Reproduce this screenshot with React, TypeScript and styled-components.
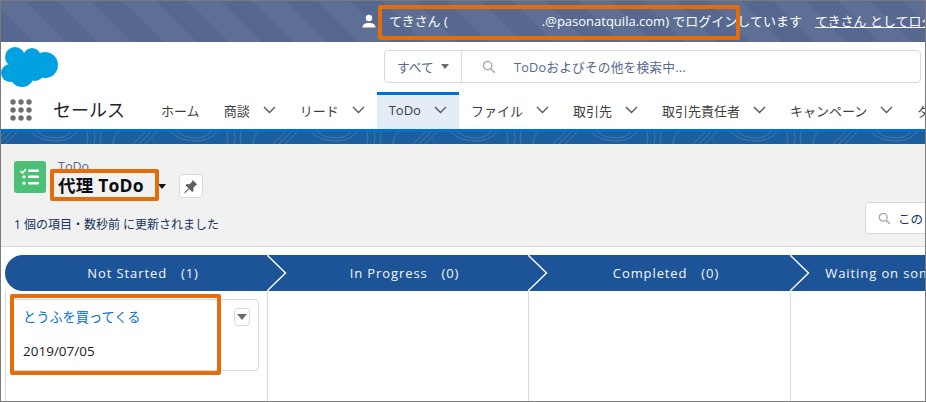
import styled, { createGlobalStyle } from 'styled-components';

const GlobalStyle = createGlobalStyle`
  html, body {
    margin: 0;
    padding: 0;
    background: #fff;
  }
  * {
    box-sizing: border-box;
  }
`

const Page = styled.div`
  position: relative;
  width: 926px;
  height: 402px;
  overflow: hidden;
  border: 1px solid #7a7a7a;
  font-family: "Open Sans", "Noto Sans CJK JP", sans-serif;
  color: #16325c;
  background: #fff;
`

const Banner = styled.div`
  height: 41px;
  padding: 0 0 2px 361px;
  display: flex;
  align-items: center;
  white-space: nowrap;
  color: #fff;
  font-size: 13px;
  background: repeating-linear-gradient(45deg, #56688f 0 23px, #5d6f94 23px 46px);
`

const UserIcon = styled.svg`
  width: 14px;
  height: 14px;
  margin-right: 13px;
  flex: none;
`

const Redacted = styled.span`
  display: inline-block;
  width: 94px;
`

const BannerLink = styled.span`
  margin-left: 13px;
  text-decoration: underline;
`

const SearchRow = styled.div`
  height: 50px;
  padding: 8px 4px 0 0;
  display: flex;
  justify-content: space-between;
  align-items: flex-start;
`

const Logo = styled.svg`
  width: 58px;
  height: 41px;
  margin-top: -3px;
  flex: none;
`

const SearchBox = styled.div`
  width: 537px;
  height: 33px;
  display: flex;
  background: #fff;
  border: 1px solid #d9d9d9;
  border-radius: 4px;
  font-size: 12.7px;
  color: #54698d;
`

const Scope = styled.div`
  width: 77px;
  display: flex;
  align-items: center;
  gap: 7px;
  padding-left: 12px;
  border-right: 1px solid #d9d9d9;
`

const Caret = styled.span<{ $color?: string; $w?: number }>`
  display: inline-block;
  width: 0;
  height: 0;
  border-left: ${p => p.$w ?? 4}px solid transparent;
  border-right: ${p => p.$w ?? 4}px solid transparent;
  border-top: ${p => (p.$w ?? 4) + 1}px solid ${p => p.$color ?? '#6b6b6b'};
`

const TitleCaret = styled(Caret)`
  margin-top: 2px;
`

const SearchHint = styled.div`
  display: flex;
  align-items: center;
  gap: 18px;
  padding-left: 20px;
  letter-spacing: 0.2px;
`

const Nav = styled.nav`
  height: 37px;
  padding-left: 9px;
  display: flex;
  align-items: stretch;
  white-space: nowrap;
`

const AppGrid = styled.svg`
  width: 22px;
  height: 22px;
  margin-top: 7px;
  flex: none;
`

const AppName = styled.div`
  width: 117px;
  padding: 3px 0 0 21px;
  font-size: 18px;
  line-height: 31px;
  color: #222;
  flex: none;
`

const Tab = styled.div<{ $active?: boolean }>`
  display: flex;
  align-items: center;
  gap: 13px;
  height: 37px;
  padding: 0 12px 4px;
  font-size: 13px;
  color: #3e3e3c;
  flex: none;
  background: ${p => (p.$active ? '#e4edf7' : 'transparent')};
  border-top: 3px solid ${p => (p.$active ? '#0070d2' : 'transparent')};
`

const Chevron = styled.svg`
  width: 13px;
  height: 8px;
  flex: none;
`

const Wave = styled.div`
  height: 15px;
  border-top: 3px solid #0070d2;
  background: #1b5f9e;
  overflow: hidden;
`

const WaveArt = styled.svg`
  display: block;
  width: 926px;
  height: 12px;
`

const ListHeader = styled.header`
  height: 103px;
  padding: 17px 0 0 13px;
  background: #f1f1f1;
  border-bottom: 1px solid #d9d9d9;
  display: flex;
  flex-direction: column;
  position: relative;
`

const TitleRow = styled.div`
  display: flex;
  align-items: flex-start;
  gap: 12px;
  height: 48px;
`

const ListIcon = styled.svg`
  width: 32px;
  height: 32px;
  flex: none;
`

const TitleStack = styled.div`
  display: flex;
  flex-direction: column;
`

const Eyebrow = styled.div`
  font-size: 12.5px;
  line-height: 12px;
  color: #54698d;
`

const TitleLine = styled.div`
  display: flex;
  align-items: center;
  gap: 14px;
  height: 24px;
`

const Title = styled.h1`
  margin: 0;
  font-size: 17.5px;
  line-height: 24px;
  font-weight: 700;
  color: #0b0b14;
  letter-spacing: 0.2px;
`

const PinButton = styled.div`
  width: 24px;
  height: 24px;
  margin: 13px 0 0 1px;
  display: flex;
  align-items: center;
  justify-content: center;
  background: #fff;
  border: 1px solid #d9d9d9;
  border-radius: 4px;
`

const Status = styled.div`
  margin-top: 8px;
  font-size: 12px;
  line-height: 16px;
  color: #16325c;
`

const ListSearch = styled.div`
  position: absolute;
  right: -7px;
  top: 58px;
  width: 67px;
  height: 32px;
  padding-left: 12px;
  display: flex;
  align-items: center;
  gap: 7px;
  background: #fff;
  border: 1px solid #d9d9d9;
  border-radius: 4px;
  font-size: 12.5px;
  overflow: hidden;
  white-space: nowrap;
`

const Board = styled.section`
  padding: 8px 0 0 4px;
  background: #fff;
`

const StageBar = styled.div`
  display: flex;
  height: 36px;
  width: 960px;
`

const Stage = styled.div<{ $first?: boolean; $w: number }>`
  position: relative;
  width: ${p => p.$w}px;
  padding: 0 0 2px 14px;
  flex: none;
  display: flex;
  align-items: center;
  justify-content: center;
  background: #1c5497;
  color: #f4f6f9;
  font-size: 13px;
  font-weight: 500;
  letter-spacing: 0.9px;
  white-space: pre;
  border-radius: ${p => (p.$first ? '18px 0 0 18px' : '0')};
`

const StageArrow = styled.svg`
  position: absolute;
  right: -20px;
  top: 0;
  width: 20px;
  height: 36px;
  z-index: 1;
`

const Columns = styled.div`
  display: flex;
  height: 110px;
  width: 960px;
`

const Column = styled.div<{ $w: number }>`
  width: ${p => p.$w}px;
  flex: none;
  padding: 8px 8px 0 0;
  border-left: 1px solid #d9d9d9;
`

const Card = styled.article`
  position: relative;
  margin-left: 4px;
  height: 72px;
  width: 249px;
  padding: 7px 12px;
  background: #fff;
  border: 1px solid #d9d9d9;
  border-radius: 4px;
`

const CardLink = styled.a`
  display: block;
  font-size: 13.2px;
  line-height: 20px;
  color: #0070d2;
`

const CardDate = styled.div`
  margin-top: 16px;
  font-size: 13.5px;
  line-height: 16px;
  color: #222;
`

const CardMenu = styled.div`
  position: absolute;
  top: 8px;
  right: 8px;
  width: 16px;
  height: 18px;
  display: flex;
  align-items: center;
  justify-content: center;
  background: #fff;
  border: 1px solid #d9d9d9;
  border-radius: 4px;
`

// orange callouts drawn on top of the screenshot
const Callout = styled.div<{ $x: number; $y: number; $w: number; $h: number }>`
  position: absolute;
  left: ${p => p.$x}px;
  top: ${p => p.$y}px;
  width: ${p => p.$w}px;
  height: ${p => p.$h}px;
  border: 4px solid #e46c0a;
  border-radius: 2px;
  pointer-events: none;
`

const Down = () => (
  <Chevron viewBox="0 0 13 8">
    <path d="M1 1l5.500 5.500L12 1" fill="none" stroke="#54585c" strokeWidth="1.400" />
  </Chevron>
)

const Arrow = () => (
  <StageArrow viewBox="0 0 20 36">
    <path d="M0 0l18.500 18L0 36z" fill="#1c5497" />
    <path d="M0 0l18.500 18L0 36" fill="none" stroke="#fff" strokeWidth="1.400" />
  </StageArrow>
)

const Magnifier = ({ size }: { size: number }) => (
  <svg width={size} height={size} viewBox="0 0 14 14" style={{ flex: 'none' }}>
    <circle cx="5.600" cy="5.600" r="4.200" fill="none" stroke="#a8a8a8" strokeWidth="1.400" />
    <path d="M8.800 8.800l4 4" stroke="#a8a8a8" strokeWidth="1.600" />
  </svg>
)

const tabs = [
  { label: 'ホーム' },
  { label: '商談', menu: true },
  { label: 'リード', menu: true },
  { label: 'ToDo', menu: true, active: true },
  { label: 'ファイル', menu: true },
  { label: '取引先', menu: true },
  { label: '取引先責任者', menu: true },
  { label: 'キャンペーン', menu: true },
  { label: 'ダッシュボード', menu: true },
]

const stages = [
  { label: 'Not Started\u3000(1)', w: 262 },
  { label: 'In Progress\u3000(0)', w: 261 },
  { label: 'Completed\u3000(0)', w: 262 },
  { label: 'Waiting on someone else\u3000(0)', w: 261 },
]

const waveMotif = [
  'M2 12L14 0M8 12L20 0M14 12L26 0',
  'M40 0q10 9 24 9t22-9M46 0q8 6 18 6t16-6',
  'M96 0q2 6 0 12M103 0q2 6 0 12M110 0q-2 6 0 12',
  'M122 12q0-8 6-12',
].join('')

export default function App() {
  return (
    <Page>
      <GlobalStyle />
      <Banner>
        <UserIcon viewBox="0 0 14 14">
          <circle cx="7" cy="4" r="3.200" fill="#fff" />
          <path d="M0.500 13.500c0-3.200 2.500-4.600 6.500-4.600s6.500 1.400 6.500 4.600z" fill="#fff" />
        </UserIcon>
        <span>
          てきさん (<Redacted />.@pasonatquila.com) でログインしています
        </span>
        <BannerLink>てきさん としてログアウト</BannerLink>
      </Banner>
      <SearchRow>
        <Logo viewBox="0 0 58 41">
          <g fill="#00a1e0">
            <circle cx="14" cy="10" r="10" />
            <circle cx="31" cy="10" r="9" />
            <circle cx="44" cy="18" r="13" />
            <circle cx="9" cy="26" r="9" />
            <circle cx="21" cy="28" r="12" />
            <circle cx="34" cy="25" r="9" />
            <rect x="12" y="12" width="30" height="14" />
          </g>
        </Logo>
        <SearchBox>
          <Scope>
            すべて
            <Caret />
          </Scope>
          <SearchHint>
            <Magnifier size={14} />
            ToDoおよびその他を検索中...
          </SearchHint>
        </SearchBox>
      </SearchRow>
      <Nav>
        <AppGrid viewBox="0 0 22 22">
          <g fill="#706e6b">
            {[3, 11, 19].flatMap(y =>
              [3, 11, 19].map(x => <circle key={`${x}-${y}`} cx={x} cy={y} r="2.700" />),
            )}
          </g>
        </AppGrid>
        <AppName>セールス</AppName>
        {tabs.map(t => (
          <Tab key={t.label} $active={t.active}>
            {t.label}
            {t.menu && <Down />}
          </Tab>
        ))}
      </Nav>
      <Wave>
        <WaveArt viewBox="0 0 926 12">
          <g fill="none" stroke="#4a80b4" strokeWidth="0.800">
            {Array.from({ length: 7 }, (_, i) => (
              <path key={i} transform={`translate(${i * 140 - 10} 0)`} d={waveMotif} />
            ))}
          </g>
        </WaveArt>
      </Wave>
      <ListHeader>
        <TitleRow>
          <ListIcon viewBox="0 0 32 32">
            <rect width="32" height="32" rx="3" fill="#4bc076" />
            <path d="M6.500 10l2 2 3.500-4" fill="none" stroke="#fff" strokeWidth="1.600" />
            <g fill="#fff">
              <rect x="14" y="8.600" width="11" height="2.400" rx="1" />
              <rect x="14" y="14.600" width="11" height="2.400" rx="1" />
              <rect x="14" y="21" width="11" height="2.400" rx="1" />
              <circle cx="10" cy="15.800" r="1.600" />
              <circle cx="10" cy="22.200" r="1.600" />
            </g>
          </ListIcon>
          <TitleStack>
            <Eyebrow>ToDo</Eyebrow>
            <TitleLine>
              <Title>代理 ToDo</Title>
              <TitleCaret $color="#111" />
            </TitleLine>
          </TitleStack>
          <PinButton>
            <svg width="15" height="15" viewBox="0 0 14 14">
              <path
                d="M8.800 0.800l4.400 4.400-1.300 0.700-2.300 2.600 0.200 2.500-1.200 1.200-2.700-2.900-4.100 4-0.600-0.600 4-4.100-2.900-2.700 1.200-1.200 2.500 0.200 2.600-2.300z"
                fill="#5f5f5f"
              />
            </svg>
          </PinButton>
        </TitleRow>
        <Status>1 個の項目・数秒前 に更新されました</Status>
        <ListSearch>
          <Magnifier size={13} />
          この
        </ListSearch>
      </ListHeader>
      <Board>
        <StageBar>
          {stages.map((s, i) => (
            <Stage key={s.label} $first={i === 0} $w={s.w}>
              {s.label}
              <Arrow />
            </Stage>
          ))}
        </StageBar>
        <Columns>
          <Column $w={262}>
            <Card>
              <CardLink>とうふを買ってくる</CardLink>
              <CardDate>2019/07/05</CardDate>
              <CardMenu>
                <Caret $w={5} />
              </CardMenu>
            </Card>
          </Column>
          <Column $w={261} />
          <Column $w={262} />
          <Column $w={261} />
        </Columns>
      </Board>
      <Callout $x={377} $y={4} $w={362} $h={35} />
      <Callout $x={49} $y={168} $w={109} $h={32} />
      <Callout $x={9} $y={293} $w={211} $h={81} />
    </Page>
  )
}
